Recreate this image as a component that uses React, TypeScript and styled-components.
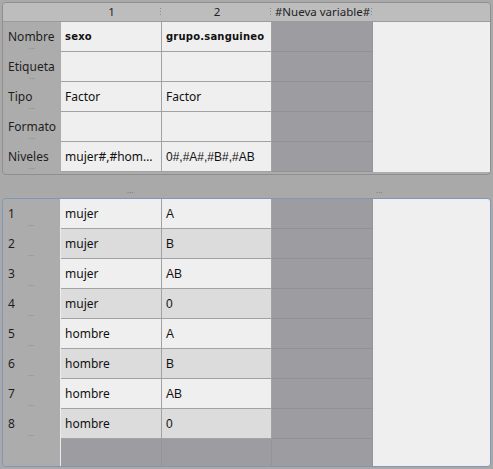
import React from "react";
import styled, { createGlobalStyle } from "styled-components";

const Global = createGlobalStyle`
  html, body { margin: 0; padding: 0; background: #a9a9a9; }
  #root { width: 493px; height: 469px; }
`;

const Root = styled.div`
  width: 493px;
  height: 469px;
  box-sizing: border-box;
  padding: 2px 2px 2px 2px;
  background: #a9a9a9;
  display: flex;
  flex-direction: column;
  font-family: "Noto Sans", "DejaVu Sans", sans-serif;
  font-size: 12px;
  color: #1e1e1e;
`;

const COLS = "58px 101px 110px 101px 1fr";

const Panel = styled.div<{ $focus?: boolean }>`
  border: 1px solid ${(p) => (p.$focus ? "#7d98bd" : "#8f8f8f")};
  border-radius: 4px;
  background: #acacac;
  overflow: hidden;
  display: grid;
  grid-template-columns: ${COLS};
`;

const TopPanel = styled(Panel)`
  grid-template-rows: 19px repeat(5, 30px);
  height: 171px;
`;

const BottomPanel = styled(Panel)`
  grid-template-rows: repeat(8, 30px) 1fr;
  flex: 1;
  box-shadow: inset 0 -1px 0 #9fb4cf;
`;

const HeadCell = styled.div`
  background: #bdbdbd;
  border-bottom: 1px solid #9c9c9c;
  display: flex;
  align-items: center;
  justify-content: center;
  position: relative;
  font-size: 11.5px;
  line-height: 14px;
  color: #222;
`;

const Grip = styled.span<{ $side: "left" | "right" }>`
  position: absolute;
  top: 5px;
  ${(p) => (p.$side === "left" ? "left: 0;" : "right: 1px;")}
  width: 1px;
  height: 9px;
  background: repeating-linear-gradient(to bottom, #8a8a8a 0 1px, transparent 1px 3px);
`;

const RowLabel = styled.div<{ $divider?: boolean }>`
  background: #acacac;
  position: relative;
  display: flex;
  align-items: center;
  padding-left: 5px;
  padding-bottom: 1px;
  font-size: 12px;
  line-height: 14px;
  color: #1e1e1e;
  ${(p) => (p.$divider ? "border-right: 1px solid #ececec;" : "")}
`;

const Dots = styled.span`
  position: absolute;
  left: 50%;
  bottom: 1px;
  transform: translateX(-50%);
  font-size: 8px;
  line-height: 5px;
  color: #8d8d8d;
`;

const Cell = styled.div<{ $alt?: boolean; $bold?: boolean; $arial?: boolean }>`
  background: ${(p) => (p.$alt ? "#dcdcdc" : "#efefef")};
  border-right: 1px solid #a2a2a2;
  border-bottom: 1px solid #a2a2a2;
  display: flex;
  align-items: center;
  padding: 0 4px 0 4px;
  white-space: nowrap;
  overflow: hidden;
  font-family: ${(p) =>
    p.$bold
      ? '"DejaVu Sans", sans-serif'
      : p.$arial
      ? '"Liberation Sans", Arial, sans-serif'
      : '"Noto Sans", sans-serif'};
  font-weight: ${(p) => (p.$bold ? 700 : 400)};
  font-size: ${(p) => (p.$bold ? "10px" : "12px")};
  letter-spacing: ${(p) => (p.$bold ? "0.2px" : "0")};
  color: #111;
`;

const GrayCell = styled.div`
  background: #9d9ca0;
  border-bottom: 1px solid #929195;
  border-right: 1px solid #959498;
`;

const BlankCol = styled.div<{ $rows: string }>`
  background: #efefef;
  grid-column: 5;
  grid-row: ${(p) => p.$rows};
`;

const Filler = styled.div`
  background: #9d9ca0;
  border-right: 1px solid #959498;
`;

const FillerLabel = styled.div`
  background: #acacac;
  border-right: 1px solid #ececec;
`;

const Splitter = styled.div`
  height: 23px;
  box-sizing: border-box;
  position: relative;
`;

const SplitDots = styled.span<{ $left: number }>`
  position: absolute;
  left: ${(p) => p.$left}px;
  bottom: 3px;
  font-size: 8px;
  line-height: 5px;
  color: #7d7d7d;
`;

const topRows: { label: string; c1: string; c2: string; bold?: boolean; arial2?: boolean }[] = [
  { label: "Nombre", c1: "sexo", c2: "grupo.sanguineo", bold: true },
  { label: "Etiqueta", c1: "", c2: "" },
  { label: "Tipo", c1: "Factor", c2: "Factor" },
  { label: "Formato", c1: "", c2: "" },
  { label: "Niveles", c1: "mujer#,#hom…", c2: "0#,#A#,#B#,#AB", arial2: true },
];

const dataRows: [string, string][] = [
  ["mujer", "A"],
  ["mujer", "B"],
  ["mujer", "AB"],
  ["mujer", "0"],
  ["hombre", "A"],
  ["hombre", "B"],
  ["hombre", "AB"],
  ["hombre", "0"],
];

export default function App() {
  return (
    <>
      <Global />
      <Root>
        <TopPanel>
          <HeadCell />
          <HeadCell>
            1
            <Grip $side="right" />
          </HeadCell>
          <HeadCell>
            2
            <Grip $side="right" />
          </HeadCell>
          <HeadCell>
            #Nueva variable#
            <Grip $side="right" />
          </HeadCell>
          <HeadCell />
          {topRows.map((r, i) => (
            <React.Fragment key={r.label}>
              <RowLabel>
                {r.label}
                <Dots>···</Dots>
              </RowLabel>
              <Cell $bold={r.bold}>{r.c1}</Cell>
              <Cell $bold={r.bold} $arial={r.arial2}>
                {r.c2}
              </Cell>
              <GrayCell />
              {i === 0 && <BlankCol $rows="2 / span 5" />}
            </React.Fragment>
          ))}
        </TopPanel>
        <Splitter>
          <SplitDots $left={125}>···</SplitDots>
          <SplitDots $left={374}>···</SplitDots>
        </Splitter>
        <BottomPanel $focus>
          {dataRows.map((r, i) => (
            <React.Fragment key={i}>
              <RowLabel $divider>
                {i + 1}
                <Dots>···</Dots>
              </RowLabel>
              <Cell $alt={i % 2 === 1}>{r[0]}</Cell>
              <Cell $alt={i % 2 === 1} $arial>
                {r[1]}
              </Cell>
              <GrayCell />
              {i === 0 && <BlankCol $rows="1 / span 9" />}
            </React.Fragment>
          ))}
          <FillerLabel />
          <Filler />
          <Filler />
          <Filler />
        </BottomPanel>
      </Root>
    </>
  );
}
